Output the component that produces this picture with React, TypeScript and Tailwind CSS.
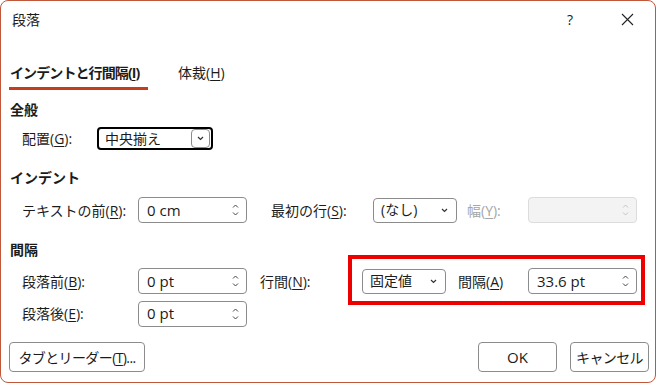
import React from "react";

const font = { fontFamily: '"Open Sans", "Noto Sans CJK JP", sans-serif' };

function Chevron({ className = "" }: { className?: string }) {
  return (
    <svg width="7" height="5" viewBox="0 0 7 5" className={className}>
      <path d="M1 1 L3.5 3.5 L6 1" fill="none" stroke="currentColor" strokeWidth="1.2" />
    </svg>
  );
}

function SpinArrows({ disabled }: { disabled?: boolean }) {
  return (
    <div className={`flex flex-col items-center gap-[4px] ${disabled ? "text-[#c4c4c4]" : "text-[#444]"}`}>
      <svg width="7" height="4" viewBox="0 0 7 4">
        <path d="M1 3.5 L3.5 1 L6 3.5" fill="none" stroke="currentColor" strokeWidth="1" />
      </svg>
      <svg width="7" height="4" viewBox="0 0 7 4">
        <path d="M1 0.5 L3.5 3 L6 0.5" fill="none" stroke="currentColor" strokeWidth="1" />
      </svg>
    </div>
  );
}

function Spin({ value, disabled }: { value?: string; disabled?: boolean }) {
  return (
    <div
      className={`w-[109px] h-[26px] rounded-[4px] border flex items-center justify-between pl-[8px] pr-[7px] ${
        disabled ? "bg-[#f3f3f3] border-[#dcdcdc]" : "bg-white border-[#8c8c8c]"
      }`}
    >
      <span className="text-[15px] leading-none">{value}</span>
      <SpinArrows disabled={disabled} />
    </div>
  );
}

function Select({ value, w = "w-[84px]" }: { value: string; w?: string }) {
  return (
    <div className={`${w} h-[25px] rounded-[4px] border border-[#8c8c8c] bg-white flex items-center justify-between pl-[7px] pr-[8px]`}>
      <span className="text-[14px] leading-none">{value}</span>
      <Chevron className="text-[#333]" />
    </div>
  );
}

function Key({ k }: { k: string }) {
  return <span className="underline underline-offset-[2px]">{k}</span>;
}

function Heading({ children, className = "" }: { children: React.ReactNode; className?: string }) {
  return <div className={`h-[20px] flex items-center pl-[9px] text-[14px] font-bold ${className}`}>{children}</div>;
}

export default function App() {
  return (
    <div className="w-[659px] h-[383px] bg-white text-[#1b1b1b]" style={font}>
      <div className="relative w-[656px] h-[383px] border border-[#c0573b] rounded-[8px] flex flex-col">
        {/* Title bar */}
        <div className="h-[37px] flex items-center justify-between pl-[11px] pr-[21px]">
          <span className="text-[14px]">段落</span>
          <div className="flex items-center gap-[48px]">
            <span className="text-[14px]">?</span>
            <svg width="13" height="13" viewBox="0 0 13 13">
              <path d="M1 1 L12 12 M12 1 L1 12" stroke="#222" strokeWidth="1.1" />
            </svg>
          </div>
        </div>

        {/* Tabs */}
        <div className="flex items-start pt-[24px] pl-[8px]">
          <div className="flex flex-col">
            <span className="h-[20px] px-[1px] flex items-center text-[14px] font-bold tracking-[-0.9px]">
              インデントと行間隔(<Key k="I" />)
            </span>
            <div className="mt-[5px] h-[3px] w-[139px] bg-[#c43e1c]" />
          </div>
          <span className="ml-[30px] h-[20px] flex items-center text-[14px]">
            体裁(<Key k="H" />)
          </span>
        </div>

        {/* 全般 */}
        <Heading className="mt-[9px]">全般</Heading>
        <div className="mt-[8px] h-[23px] flex items-center pl-[21px]">
          <span className="w-[75px] text-[14px]">
            配置(<Key k="G" />):
          </span>
          <div className="w-[116px] h-[23px] rounded-[4px] border-2 border-black flex items-center justify-between pl-[6px] pr-[1px]">
            <span className="text-[14px] leading-none">中央揃え</span>
            <div className="w-[19px] h-[19px] rounded-[4px] border border-[#8c8c8c] flex items-center justify-center">
              <Chevron className="text-[#333]" />
            </div>
          </div>
        </div>

        {/* インデント */}
        <Heading className="mt-[17px]">インデント</Heading>
        <div className="mt-[10px] h-[26px] flex items-center pl-[21px]">
          <span className="w-[116px] text-[14px]">
            テキストの前(<Key k="R" />):
          </span>
          <Spin value="0 cm" />
          <span className="ml-[24px] w-[102px] text-[14px]">
            最初の行(<Key k="S" />):
          </span>
          <Select value="(なし)" />
          <span className="ml-[10px] w-[61px] text-[14px] text-[#a6a6a6]">
            幅(<Key k="Y" />):
          </span>
          <Spin disabled />
        </div>

        {/* 間隔 */}
        <Heading className="mt-[16px]">間隔</Heading>
        <div className="mt-[9px] h-[26px] flex items-center pl-[21px]">
          <span className="w-[116px] text-[14px]">
            段落前(<Key k="B" />):
          </span>
          <Spin value="0 pt" />
          <span className="ml-[13px] w-[102px] text-[14px]">
            行間(<Key k="N" />):
          </span>
          <Select value="固定値" />
          <span className="ml-[12px] w-[70px] text-[14px]">
            間隔(<Key k="A" />)
          </span>
          <Spin value="33.6 pt" />
        </div>
        <div className="mt-[6px] h-[27px] flex items-center pl-[21px]">
          <span className="w-[116px] text-[14px]">
            段落後(<Key k="E" />):
          </span>
          <Spin value="0 pt" />
        </div>

        {/* Buttons */}
        <div className="mt-[15px] flex items-center pl-[8px] pr-[6px]">
          <button className="w-[136px] h-[30px] rounded-[4px] border border-[#8c8c8c] bg-white text-[14px] tracking-[-0.6px]">
            タブとリーダー(<Key k="T" />)...
          </button>
          <div className="ml-auto flex gap-[13px]">
            <button className="w-[79px] h-[30px] rounded-[4px] border border-[#8c8c8c] bg-white text-[15px]">OK</button>
            <button className="w-[79px] h-[30px] rounded-[4px] border border-[#8c8c8c] bg-white text-[14px] tracking-[-0.6px]">
              キャンセル
            </button>
          </div>
        </div>

        {/* annotation */}
        <div className="absolute left-[347px] top-[254px] w-[297px] h-[50px] border-[4px] border-[#ee0000]" />
      </div>
    </div>
  );
}
